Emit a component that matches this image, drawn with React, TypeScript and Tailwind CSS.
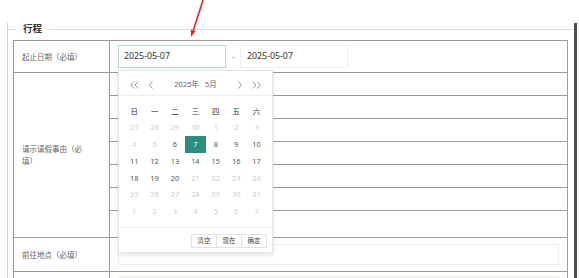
import React from "react";

const FONT = { fontFamily: '"Noto Sans", "Noto Sans CJK SC", sans-serif' };

type Day = { d: number; on?: boolean; sel?: boolean };

const weeks: Day[][] = [
  [{ d: 27 }, { d: 28 }, { d: 29 }, { d: 30 }, { d: 1 }, { d: 2 }, { d: 3 }],
  [{ d: 4 }, { d: 5 }, { d: 6, on: true }, { d: 7, on: true, sel: true }, { d: 8, on: true }, { d: 9, on: true }, { d: 10, on: true }],
  [11, 12, 13, 14, 15, 16, 17].map((d) => ({ d, on: true })),
  [{ d: 18, on: true }, { d: 19, on: true }, { d: 20, on: true }, { d: 21 }, { d: 22 }, { d: 23 }, { d: 24 }],
  [25, 26, 27, 28, 29, 30, 31].map((d) => ({ d })),
  [1, 2, 3, 4, 5, 6, 7].map((d) => ({ d })),
];

function DoubleChevron({ right }: { right?: boolean }) {
  return (
    <svg width="9" height="8" viewBox="0 0 9 8" className={right ? "rotate-180" : ""}>
      <polyline points="4,0.5 0.8,4 4,7.5" fill="none" stroke="#999" strokeWidth="1" />
      <polyline points="8.2,0.5 5,4 8.2,7.5" fill="none" stroke="#999" strokeWidth="1" />
    </svg>
  );
}

function Chevron({ right }: { right?: boolean }) {
  return (
    <svg width="4" height="8" viewBox="0 0 4 8" className={right ? "rotate-180" : ""}>
      <polyline points="3.5,0.5 0.5,4 3.5,7.5" fill="none" stroke="#999" strokeWidth="1" />
    </svg>
  );
}

function Calendar() {
  return (
    <div className="absolute left-[118px] top-[70px] w-[155px] h-[183px] bg-white border border-[#e4e4e4] shadow-[0_2px_5px_rgba(0,0,0,0.12)] flex flex-col">
      <div className="h-[25px] border-b border-[#eeeeee] flex items-center px-[11px] pt-[4px]">
        <div className="flex items-center gap-[10px]">
          <DoubleChevron />
          <Chevron />
        </div>
        <div className="flex-1 text-center text-[7.5px] text-[#666]">
          2025年<span className="ml-[6px]">5月</span>
        </div>
        <div className="flex items-center gap-[10px]">
          <Chevron right />
          <DoubleChevron right />
        </div>
      </div>
      <div className="pt-[7px] pb-[7px] pl-[5px]">
        <div className="grid grid-cols-[repeat(7,20.4px)] auto-rows-[16.7px] text-[7.4px]">
          {["日", "一", "二", "三", "四", "五", "六"].map((w) => (
            <div key={w} className="flex items-center justify-center text-[#333]">
              {w}
            </div>
          ))}
          {weeks.flat().map((x, i) => (
            <div
              key={i}
              className={
                x.sel
                  ? "flex items-center justify-center bg-[#2a8f80] text-white"
                  : x.on
                  ? "flex items-center justify-center text-[#555]"
                  : "flex items-center justify-center text-[#cccccc]"
              }
            >
              {x.d}
            </div>
          ))}
        </div>
      </div>
      <div className="flex-1 border-t border-[#eeeeee] flex justify-end items-start pt-[6px] pr-[5px]">
        {["清空", "现在", "确定"].map((b, i) => (
          <div
            key={b}
            className={
              (i > 0 ? "-ml-px " : "") +
              "w-[26px] h-[14px] border border-[#e2e2e2] flex items-center justify-center text-[6.5px] text-[#444]"
            }
          >
            {b}
          </div>
        ))}
      </div>
    </div>
  );
}

function Label({ children }: { children: React.ReactNode }) {
  return (
    <div className="w-[96px] shrink-0 border-r border-[#9a9a9a] flex items-center pl-[8px] text-[7.5px] leading-[12px] text-[#666]">
      {children}
    </div>
  );
}

export default function App() {
  return (
    <div className="relative w-[579px] h-[278px] bg-white overflow-hidden" style={FONT}>
      <div className="ml-[7px] w-[570px] h-full border-l border-[#cfcfcf] border-r-[3px] border-r-[#4d4d4d]">
        <div className="mt-[23px] h-[12px] flex items-start">
          <span className="w-[8px] h-px mt-[6px] bg-[#dcdcdc]" />
          <span className="px-[7px] text-[9.5px] leading-[12px] font-bold text-[#333]">行程</span>
          <span className="flex-1 h-px mt-[6px] bg-[#dcdcdc]" />
        </div>
        <div className="mt-[5px] ml-[5px] w-[555px] border-t border-l border-r border-[#9a9a9a]">
          {/* row 1 */}
          <div className="flex h-[32px] border-b border-[#9a9a9a]">
            <Label>起止日期（必填）</Label>
            <div className="flex items-center pl-[8px]">
              <div className="w-[108px] h-[23px] border border-[#b9d6cd] flex items-center pl-[5px] text-[8.8px] text-[#333]">
                2025-05-07
              </div>
              <div className="w-[14px] text-center text-[8px] text-[#999]">-</div>
              <div className="w-[108px] h-[23px] border border-[#efefef] flex items-center pl-[6px] text-[8.8px] text-[#333]">
                2025-05-07
              </div>
            </div>
          </div>
          {/* row 2 */}
          <div className="flex h-[165px] border-b border-[#9a9a9a]">
            <Label>
              <div className="w-[66px]">请示请假事由（必填）</div>
            </Label>
            <div className="flex-1 flex flex-col">
              <div className="h-[23px] border-b border-[#9a9a9a]" />
              <div className="h-[23px] border-b border-[#9a9a9a]" />
              <div className="h-[23px] border-b border-[#9a9a9a]" />
              <div className="h-[23px] border-b border-[#9a9a9a]" />
              <div className="h-[23px] border-b border-[#9a9a9a]" />
              <div className="h-[23px] border-b border-[#9a9a9a]" />
              <div className="h-[26px]" />
            </div>
          </div>
          {/* row 3 */}
          <div className="flex h-[34px] border-b border-[#9a9a9a]">
            <Label>前往地点（必填）</Label>
            <div className="flex items-center pl-[8px]">
              <div className="w-[441px] h-[21px] border border-[#eeeeee]" />
            </div>
          </div>
          {/* row 4 */}
          <div className="flex h-[40px]">
            <Label>{""}</Label>
            <div className="pl-[8px] pt-[4px]">
              <div className="w-[441px] h-[21px] border border-[#eeeeee] bg-[#fcfbea]" />
            </div>
          </div>
        </div>
      </div>
      <Calendar />
      <svg className="absolute left-[185px] top-0" width="22" height="40" viewBox="0 0 22 40">
        <line x1="18" y1="0" x2="8.3" y2="30.5" stroke="#e3262b" strokeWidth="1.6" />
        <polygon points="6,37 10.6,31.1 5.8,29.6" fill="#e3262b" />
      </svg>
    </div>
  );
}
